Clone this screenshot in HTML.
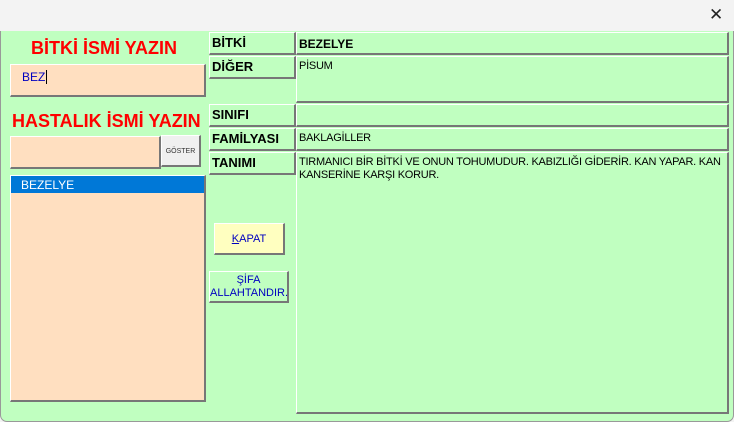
<!DOCTYPE html>
<html><head><meta charset="utf-8"><style>
*{margin:0;padding:0;box-sizing:border-box}
body{width:734px;height:422px;background:#f3f3f3;font-family:"Liberation Sans","DejaVu Sans",sans-serif;position:relative;overflow:hidden}
.win{position:absolute;left:0;top:31px;width:734px;height:391px;background:#c0ffc0;border:1px solid #999;border-top:none;border-radius:0 0 7px 7px}
.a{position:absolute}
.box{position:absolute;border-top:1px solid #fff;border-left:1px solid #fff;border-right:2px solid #777;border-bottom:2px solid #777}
.pe{background:#ffdfc0}
.lbl{font-weight:bold;font-size:13px;color:#000;padding:2px 0 0 2px}
.val{font-size:11px;padding:3px 2px;color:#000;line-height:13px;letter-spacing:-0.25px}
.t{position:absolute;color:#f00;font-weight:bold;font-size:18px;white-space:nowrap}
</style></head><body>
<div class="a" style="left:709px;top:5px;font-size:17px;color:#222">✕</div>
<div class="win"></div>
<div class="t" style="left:31px;top:38px">BİTKİ İSMİ YAZIN</div>
<div class="box pe" style="left:10px;top:64px;width:196px;height:33px;font-size:12px;color:#0000c0;padding:5px 0 0 11px">BEZ<span style="border-left:1px solid #000;margin-left:1px"></span></div>
<div class="t" style="left:12px;top:111px">HASTALIK İSMİ YAZIN</div>
<div class="box pe" style="left:10px;top:136px;width:151px;height:33px"></div>
<div class="box" style="left:161px;top:135px;width:40px;height:32px;background:#f0f0f0;font-size:7px;color:#333;text-align:center;padding-top:12px">GÖSTER</div>
<div class="box pe" style="left:10px;top:175px;width:196px;height:227px"><div style="background:#0078d7;color:#fff;font-size:12px;height:17px;padding:2px 0 0 10px">BEZELYE</div></div>
<div class="box lbl" style="left:209px;top:32px;width:87px;height:23px">BİTKİ</div>
<div class="box lbl" style="left:209px;top:56px;width:87px;height:23px">DİĞER</div>
<div class="box lbl" style="left:209px;top:104px;width:87px;height:23px">SINIFI</div>
<div class="box lbl" style="left:209px;top:128px;width:87px;height:23px">FAMİLYASI</div>
<div class="box lbl" style="left:209px;top:152px;width:87px;height:23px">TANIMI</div>
<div class="box lbl" style="left:296px;top:32px;width:433px;height:23px;padding-top:4px;font-size:12px">BEZELYE</div>
<div class="box val" style="left:296px;top:56px;width:433px;height:47px">PİSUM</div>
<div class="box val" style="left:296px;top:104px;width:433px;height:23px"></div>
<div class="box val" style="left:296px;top:128px;width:433px;height:23px">BAKLAGİLLER</div>
<div class="box val" style="left:296px;top:152px;width:433px;height:262px">TIRMANICI BİR BİTKİ VE ONUN TOHUMUDUR. KABIZLIĞI GİDERİR. KAN YAPAR. KAN<br>KANSERİNE KARŞI KORUR.</div>
<div class="box" style="left:214px;top:223px;width:71px;height:32px;background:#ffffc0;font-size:11px;color:#0000c0;text-align:center;padding-top:9px"><u>K</u>APAT</div>
<div class="box" style="left:209px;top:271px;width:80px;height:32px;background:#c0ffc0;font-size:11px;color:#0000c0;text-align:center;line-height:13px;padding-top:2px">ŞİFA<br>ALLAHTANDIR.</div>
</body></html>
